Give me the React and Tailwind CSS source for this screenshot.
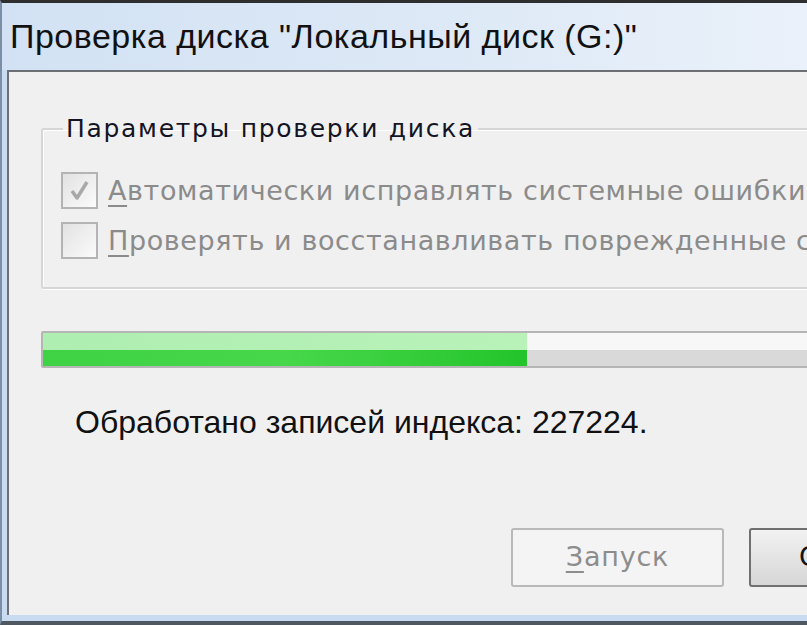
import React from 'react';

function CheckBox({ checked }) {
  return (
    <div className="w-[37px] h-[37px] shrink-0 border-2 border-[#b4b4b4] bg-gradient-to-br from-[#e2e2e2] to-[#fbfbfb] flex items-center justify-center">
      {checked && (
        <svg width="26" height="26" viewBox="0 0 26 26">
          <path d="M5 13 L10 20 L20 4" fill="none" stroke="#a8a8a8" strokeWidth="3.5" strokeLinejoin="round" />
        </svg>
      )}
    </div>
  );
}

function Option({ checked, hotkey, rest }) {
  return (
    <div className="flex items-center gap-[10px] whitespace-nowrap">
      <CheckBox checked={checked} />
      <span className="text-[27px] leading-none tracking-[0.6px] text-[#8b8b8b]">
        <span className="underline underline-offset-[5px] decoration-2">{hotkey}</span>
        {rest}
      </span>
    </div>
  );
}

export default function App() {
  return (
    <div className="w-[807px] h-[625px] overflow-hidden flex flex-col bg-[#c8dbf0] border-t-[3px] border-t-[#2e2e2e] border-b-[4px] border-b-[#4f5760] border-l-2 border-l-[#7a8ea6]">
      {/* title bar */}
      <div className="h-[67px] shrink-0 flex items-center pl-[8px] bg-gradient-to-r from-[#d2e2f4] via-[#dce8f6] to-[#eaf1fa]">
        <span className="text-[34px] tracking-[0.5px] text-[#111] whitespace-nowrap" style={{ fontFamily: '"Liberation Sans", Arial, sans-serif' }}>
          Проверка диска "Локальный диск (G:)"
        </span>
      </div>

      {/* client area */}
      <div className="flex-1 ml-[5px] mb-[6px] border-l-2 border-t-2 border-[#6c7075] bg-[#f0f0f0] overflow-hidden" style={{ fontFamily: '"DejaVu Sans", Verdana, sans-serif' }}>
        <div className="w-[1000px] pl-[32px] pt-[44px]">
          <fieldset className="border-2 border-[#d6d6d6] rounded-[3px] shadow-[inset_1px_1px_0_#fff,1px_1px_0_#fff] pl-[18px] pt-[31px] pb-[28px] flex flex-col gap-[13px]">
            <legend className="ml-[2px] px-[3px] text-[25px] text-[#141424] leading-none tracking-[1.7px]">Параметры проверки диска</legend>
            <Option checked hotkey="А" rest="втоматически исправлять системные ошибки" />
            <Option hotkey="П" rest="роверять и восстанавливать поврежденные сектора" />
          </fieldset>

          <div className="mt-[42px] h-[37px] border-2 border-[#b5b5b5] rounded-[2px] flex overflow-hidden">
            <div className="w-[484px] flex flex-col">
              <div className="flex-1 bg-gradient-to-r from-[#aeeeb0] to-[#b9f2b9]" />
              <div className="flex-1 bg-gradient-to-r from-[#3fd244] via-[#46d84a] to-[#22c42a]" />
            </div>
            <div className="flex-1 flex flex-col">
              <div className="flex-1 bg-[#f7f7f7]" />
              <div className="flex-1 bg-[#d9d9d9]" />
            </div>
          </div>

          <div className="mt-[38px] pl-[34px] text-[32px] text-[#111] leading-none whitespace-nowrap" style={{ fontFamily: '"Liberation Sans", Arial, sans-serif' }}>
            Обработано записей индекса: 227224.
          </div>

          <div className="mt-[90px] pl-[470px] flex gap-[25px]">
            <div className="w-[213px] h-[59px] shrink-0 border-2 border-[#b9b9b9] rounded-[3px] bg-[#f4f4f4] flex items-center justify-center text-[27px] tracking-[0.8px] text-[#8d8d8d]">
              <span><span className="underline underline-offset-[5px] decoration-2">З</span>апуск</span>
            </div>
            <div className="w-[213px] h-[59px] shrink-0 border-2 border-[#707070] rounded-[3px] bg-gradient-to-b from-[#f2f2f2] to-[#d6d6d6] flex items-center justify-center text-[27px] tracking-[0.8px] text-[#111]">
              Отмена
            </div>
          </div>
        </div>
      </div>
    </div>
  );
}
